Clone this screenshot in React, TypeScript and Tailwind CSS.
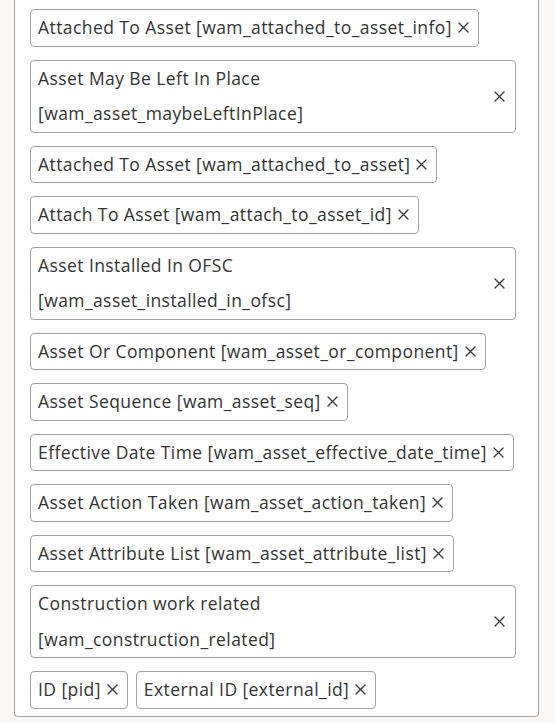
import React from "react";

type Chip = { lines: string[]; wide?: boolean };

const chips: Chip[] = [
  { lines: ["Attached To Asset [wam_attached_to_asset_info]"] },
  { lines: ["Asset May Be Left In Place", "[wam_asset_maybeLeftInPlace]"], wide: true },
  { lines: ["Attached To Asset [wam_attached_to_asset]"] },
  { lines: ["Attach To Asset [wam_attach_to_asset_id]"] },
  { lines: ["Asset Installed In OFSC", "[wam_asset_installed_in_ofsc]"], wide: true },
  { lines: ["Asset Or Component [wam_asset_or_component]"] },
  { lines: ["Asset Sequence [wam_asset_seq]"] },
  { lines: ["Effective Date Time [wam_asset_effective_date_time]"] },
  { lines: ["Asset Action Taken [wam_asset_action_taken]"] },
  { lines: ["Asset Attribute List [wam_asset_attribute_list]"] },
  { lines: ["Construction work related", "[wam_construction_related]"], wide: true },
  { lines: ["ID [pid]"] },
  { lines: ["External ID [external_id]"] },
];

function CloseIcon() {
  return (
    <svg width="11" height="11" viewBox="0 0 11 11" className="shrink-0">
      <path d="M1 1 L10 10 M10 1 L1 10" stroke="#3d3d3d" strokeWidth="1.4" strokeLinecap="round" />
    </svg>
  );
}

export default function App() {
  return (
    <div
      className="w-[555px] h-[723px] overflow-hidden bg-[#f9f8f6]"
      style={{ fontFamily: '"Open Sans", "Noto Sans", sans-serif' }}
    >
      <div className="ml-[14px] w-[525px] h-[717px] border-x border-b border-[#a3a3a3] rounded-b-[4px] bg-white pl-[15px] pr-[22px] pt-[9px]">
        <div className="flex flex-wrap gap-x-[8px] gap-y-[13px]">
          {chips.map((c, i) => (
            <div
              key={i}
              className={`flex items-center border border-[#a3a3a3] rounded-[4px] pl-[7px] pr-[9px] text-[17.5px] tracking-[0.42px] text-[#333333] ${c.wide ? "w-full" : ""}`}
            >
              <div className="flex-1 leading-[35.5px] whitespace-nowrap">
                {c.lines.map((l, j) => (
                  <div key={j}>{l}</div>
                ))}
              </div>
              <div className={c.wide ? "ml-[8px] mr-[1px]" : "ml-[6px]"}>
                <CloseIcon />
              </div>
            </div>
          ))}
        </div>
      </div>
    </div>
  );
}
